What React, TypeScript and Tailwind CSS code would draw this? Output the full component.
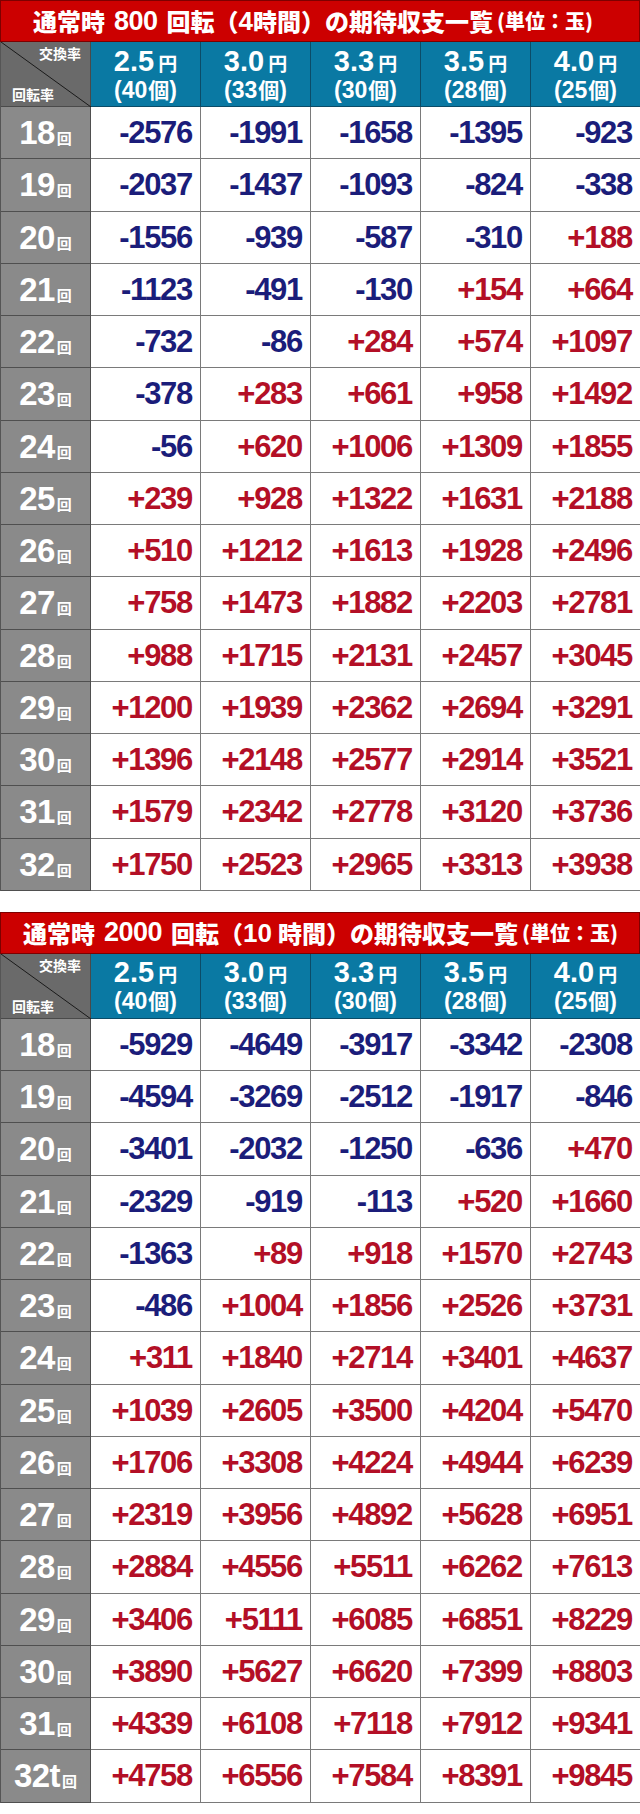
import React from "react";

const LATIN = '"Liberation Sans", "Noto Sans CJK JP", sans-serif';
const CJK = '"Noto Sans CJK JP", "Liberation Sans", sans-serif';

const heads = [
  ["2.5", "40"],
  ["3.0", "33"],
  ["3.3", "30"],
  ["3.5", "28"],
  ["4.0", "25"],
];

type Row = [string, string[]];

const t1: Row[] = [
  ["18", ["-2576", "-1991", "-1658", "-1395", "-923"]],
  ["19", ["-2037", "-1437", "-1093", "-824", "-338"]],
  ["20", ["-1556", "-939", "-587", "-310", "+188"]],
  ["21", ["-1123", "-491", "-130", "+154", "+664"]],
  ["22", ["-732", "-86", "+284", "+574", "+1097"]],
  ["23", ["-378", "+283", "+661", "+958", "+1492"]],
  ["24", ["-56", "+620", "+1006", "+1309", "+1855"]],
  ["25", ["+239", "+928", "+1322", "+1631", "+2188"]],
  ["26", ["+510", "+1212", "+1613", "+1928", "+2496"]],
  ["27", ["+758", "+1473", "+1882", "+2203", "+2781"]],
  ["28", ["+988", "+1715", "+2131", "+2457", "+3045"]],
  ["29", ["+1200", "+1939", "+2362", "+2694", "+3291"]],
  ["30", ["+1396", "+2148", "+2577", "+2914", "+3521"]],
  ["31", ["+1579", "+2342", "+2778", "+3120", "+3736"]],
  ["32", ["+1750", "+2523", "+2965", "+3313", "+3938"]],
];

const t2: Row[] = [
  ["18", ["-5929", "-4649", "-3917", "-3342", "-2308"]],
  ["19", ["-4594", "-3269", "-2512", "-1917", "-846"]],
  ["20", ["-3401", "-2032", "-1250", "-636", "+470"]],
  ["21", ["-2329", "-919", "-113", "+520", "+1660"]],
  ["22", ["-1363", "+89", "+918", "+1570", "+2743"]],
  ["23", ["-486", "+1004", "+1856", "+2526", "+3731"]],
  ["24", ["+311", "+1840", "+2714", "+3401", "+4637"]],
  ["25", ["+1039", "+2605", "+3500", "+4204", "+5470"]],
  ["26", ["+1706", "+3308", "+4224", "+4944", "+6239"]],
  ["27", ["+2319", "+3956", "+4892", "+5628", "+6951"]],
  ["28", ["+2884", "+4556", "+5511", "+6262", "+7613"]],
  ["29", ["+3406", "+5111", "+6085", "+6851", "+8229"]],
  ["30", ["+3890", "+5627", "+6620", "+7399", "+8803"]],
  ["31", ["+4339", "+6108", "+7118", "+7912", "+9341"]],
  ["32t", ["+4758", "+6556", "+7584", "+8391", "+9845"]],
];

function Title({ rounds, hours, pl, hgap }: { rounds: string; hours: string; pl: string; hgap: string }) {
  return (
    <div
      className={`h-[42px] bg-[#cc0000] border border-[#7d0000] flex items-center text-white font-black whitespace-nowrap ${pl}`}
      style={{ fontFamily: CJK }}
    >
      <span className="text-[24px] leading-none">通常時</span>
      <span className="text-[27px] leading-none font-bold mx-[9px] tracking-[-0.5px]" style={{ fontFamily: LATIN }}>
        {rounds}
      </span>
      <span className="text-[24px] leading-none">回転（</span>
      <span className={`text-[26px] leading-none font-bold ${hgap}`} style={{ fontFamily: LATIN }}>
        {hours}
      </span>
      <span className="text-[24px] leading-none">時間）の期待収支一覧</span>
      <span className="text-[20px] leading-none ml-[4px]">(単位：玉)</span>
    </div>
  );
}

function Table({ rows, title }: { rows: Row[]; title: React.ReactNode }) {
  return (
    <div className="w-[640px]">
      {title}
      <div className="grid grid-cols-[90px_repeat(5,110px)] border-l border-r border-[#555]">
        <div className="relative h-[65px] bg-[#6a6a6a] border-b border-r border-[#4a4a4a] text-white font-bold" style={{ fontFamily: CJK }}>
          <svg className="absolute inset-0" width="90" height="65" viewBox="0 0 90 65">
            <line x1="0" y1="0" x2="90" y2="65" stroke="#1a1a1a" strokeWidth="1" />
          </svg>
          <span className="absolute right-[9px] top-[4px] text-[14px] leading-none">交換率</span>
          <span className="absolute left-[11px] bottom-[5px] text-[14px] leading-none">回転率</span>
        </div>
        {heads.map(([r, n]) => (
          <div
            key={r}
            className="h-[65px] bg-[#0a79a3] border-b border-r border-[#0b4c68] flex flex-col items-center justify-center text-white font-bold"
            style={{ fontFamily: LATIN }}
          >
            <div className="flex items-baseline leading-none">
              <span className="text-[29px] leading-none">{r}</span>
              <span className="text-[19px] leading-none ml-[4px]" style={{ fontFamily: CJK }}>
                円
              </span>
            </div>
            <div className="text-[23px] leading-none mt-[3px] flex items-baseline">
              <span>(</span>
              <span>{n}</span>
              <span style={{ fontFamily: CJK }} className="text-[21px] ml-[1px]">個</span>
              <span>)</span>
            </div>
          </div>
        ))}
        {rows.map(([label, vals]) => (
          <React.Fragment key={label}>
            <div className="h-[52.25px] bg-[#8a8a8a] border-b border-r border-[#4f4f4f] flex items-center justify-center text-white font-bold">
              <span className="flex items-baseline">
                <span className="text-[33px] leading-none tracking-[-0.5px]" style={{ fontFamily: LATIN }}>
                  {label}
                </span>
                <span className="text-[15px] leading-none ml-[2px]" style={{ fontFamily: CJK }}>
                  回
                </span>
              </span>
            </div>
            {vals.map((v, i) => (
              <div
                key={i}
                className={`h-[52.25px] bg-white border-b border-r border-[#7a7a7a] flex items-center justify-end pr-[8px] text-[31px] font-bold leading-none tracking-[-1.3px] ${
                  v.startsWith("+") ? "text-[#b30f26]" : "text-[#1b1d7a]"
                }`}
                style={{ fontFamily: LATIN }}
              >
                {v}
              </div>
            ))}
          </React.Fragment>
        ))}
      </div>
    </div>
  );
}

export default function App() {
  return (
    <div className="w-[640px] bg-white flex flex-col">
      <Table rows={t1} title={<Title rounds="800" hours="4" pl="pl-[32px]" hgap="" />} />
      <div className="h-[21px]" />
      <Table rows={t2} title={<Title rounds="2000" hours="10" pl="pl-[22px]" hgap="mr-[6px]" />} />
      <div className="h-[11px]" />
    </div>
  );
}
